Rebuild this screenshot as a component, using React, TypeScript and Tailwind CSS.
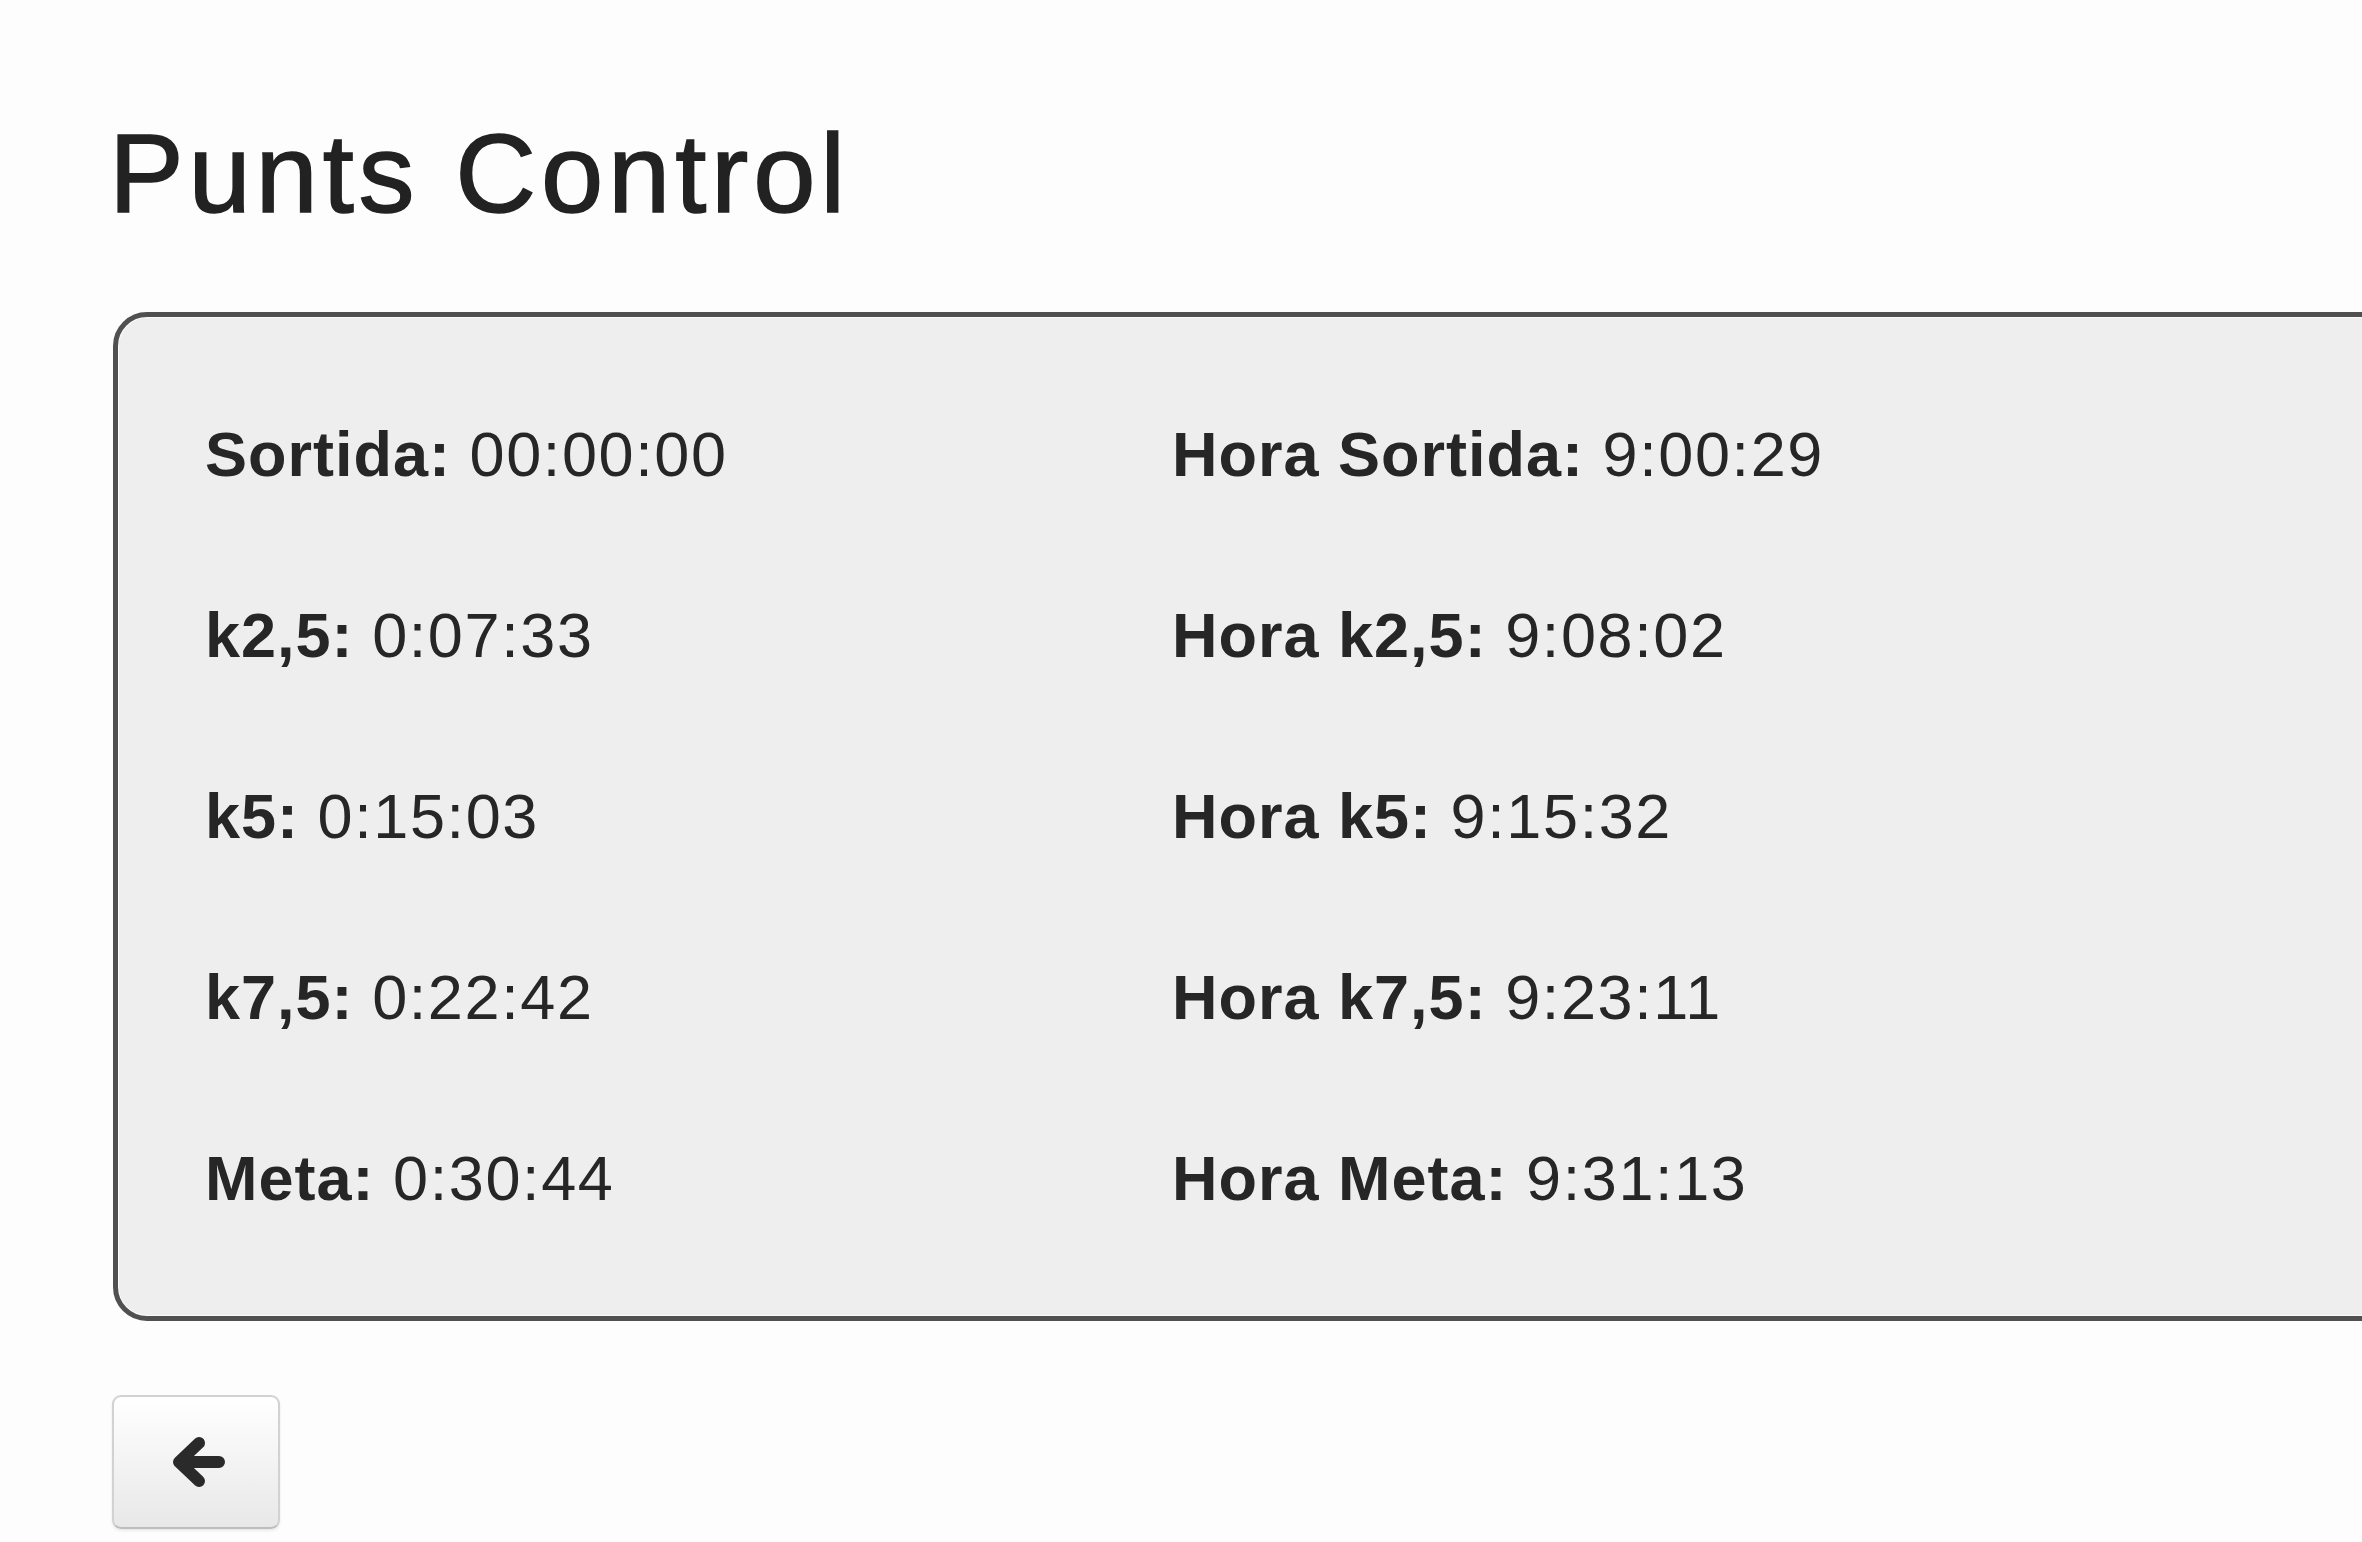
const rows: [string, string, string, string][] = [
  ['Sortida:', '00:00:00', 'Hora Sortida:', '9:00:29'],
  ['k2,5:', '0:07:33', 'Hora k2,5:', '9:08:02'],
  ['k5:', '0:15:03', 'Hora k5:', '9:15:32'],
  ['k7,5:', '0:22:42', 'Hora k7,5:', '9:23:11'],
  ['Meta:', '0:30:44', 'Hora Meta:', '9:31:13'],
]

function ArrowLeft() {
  return (
    <svg width="58" height="52" viewBox="0 0 58 52" fill="none">
      <path
        d="M32 7 L12 26 L32 45 M14 26 L52 26"
        stroke="#2a2a2a"
        strokeWidth="12"
        strokeLinecap="round"
        strokeLinejoin="round"
      />
    </svg>
  )
}

export default function App() {
  return (
    <div
      className="w-screen h-screen overflow-hidden bg-[#fdfdfd] text-[#262626] pl-[113px]"
      style={{ fontFamily: '"Liberation Sans", Arial, sans-serif' }}
    >
      <h1 className="pt-[118px] -ml-[4px] text-[112px] leading-none tracking-[4.8px] whitespace-nowrap text-[#222] [-webkit-text-stroke:1.5px_#222]">
        Punts Control
      </h1>

      {/* Times panel */}
      <div className="mt-[82px] w-[2320px] rounded-[34px] border-[5px] border-[#505050] bg-[#eeeeee] shadow-[inset_0_0_0_1px_#fafafa] pl-[87px] pt-[47px] pb-[47px]">
        {rows.map(([a, av, b, bv]) => (
          <div key={a} className="flex h-[181px] items-center text-[63px] leading-none whitespace-nowrap tracking-[1px]">
            <div className="w-[967px]">
              <b>{a}</b> <span className="tracking-[1.6px]">{av}</span>
            </div>
            <div>
              <b>{b}</b> <span className="tracking-[1.6px]">{bv}</span>
            </div>
          </div>
        ))}
      </div>

      <button className="mt-[74px] -ml-px flex h-[134px] w-[168px] items-center justify-center rounded-[9px] border-2 border-[#d2d2d2] border-b-[#bdbdbd] bg-gradient-to-b from-white to-[#e8e8e8] shadow-[0_2px_3px_rgba(0,0,0,0.08)]">
        <ArrowLeft />
      </button>
    </div>
  )
}
